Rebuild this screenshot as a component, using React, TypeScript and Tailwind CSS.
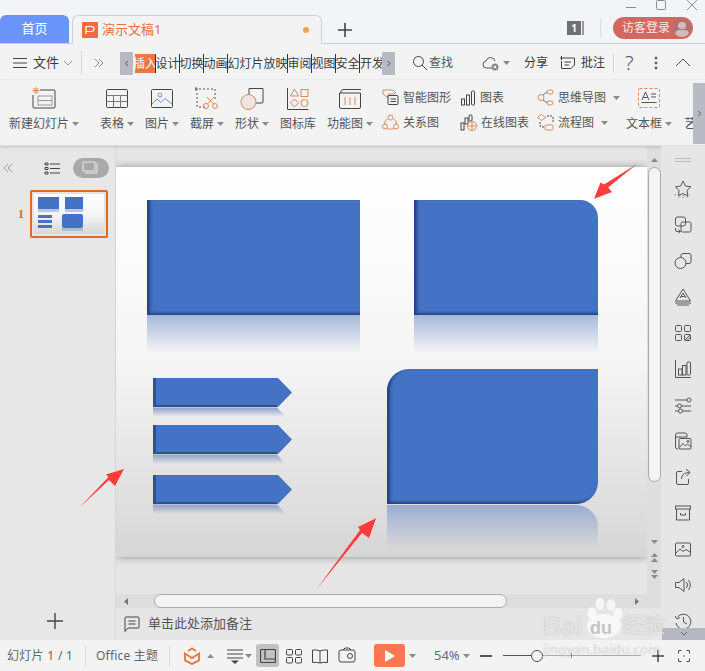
import type { ReactNode } from "react";

function Ico({ s = 24, h, className = "", children }: { s?: number; h?: number; className?: string; children?: ReactNode }) {
  return (
    <svg width={s} height={h ?? s} viewBox={`0 0 ${s} ${h ?? s}`} fill="none" stroke="currentColor" strokeWidth={1} className={`shrink-0 ${className}`}>
      {children}
    </svg>
  );
}

function Caret({ up = false, className = "" }: { up?: boolean; className?: string }) {
  return (
    <svg width="7" height="4" viewBox="0 0 7 4" className={`shrink-0 fill-[#8a8a8a] ${className}`}>
      <path d={up ? "M0 4 L3.5 0 L7 4 Z" : "M0 0 L7 0 L3.5 4 Z"} />
    </svg>
  );
}

const OR = "#d98a5f";

function Tool({ w, label, caret = true, icon }: { w: string; label: string; caret?: boolean; icon: ReactNode }) {
  return (
    <div className={`flex shrink-0 flex-col items-center pt-[7px] ${w}`}>
      <div className="flex h-6 w-6 items-center justify-center">{icon}</div>
      <div className="mt-[5px] flex h-4 items-center gap-[3px] whitespace-nowrap text-[12px] leading-4 text-[#555]">
        {label}
        {caret && <Caret />}
      </div>
    </div>
  );
}

function MiniTool({ icon, label, caret = false }: { icon: ReactNode; label: string; caret?: boolean }) {
  return (
    <div className="flex h-[25px] items-center gap-[4px] whitespace-nowrap text-[12px] text-[#555]">
      {icon}
      {label}
      {caret && <Caret className="ml-[3px]" />}
    </div>
  );
}

const tabs = [
  { t: "设计", w: "w-6" },
  { t: "切换", w: "w-6" },
  { t: "动画", w: "w-6" },
  { t: "幻灯片放映", w: "w-[60px]" },
  { t: "审阅", w: "w-6" },
  { t: "视图", w: "w-6" },
  { t: "安全", w: "w-6" },
  { t: "开发", w: "w-6" },
];

const sideIcons: ReactNode[] = [
  <><path d="M10 2 L12.4 7 L18 7.8 L14 11.5 L15 17 L10 14.5 L5.5 16.5 L6 11.5 L2.5 7.8 L7.6 7 Z" /><path d="M3 15 l-1.5 2 M7 16 l-1.5 3 M11 16 l-1.5 3 M15 17 l-1.5 2" strokeDasharray="1 1" /></>,
  <><rect x="2.5" y="2" width="10" height="9" rx="2" /><rect x="8" y="7" width="10" height="10" rx="1.5" /><path d="M2.5 13 v2 q0 1.5 1.5 1.5 h3 M5.5 14.5 L7.5 16.5 L5.5 18" /></>,
  <><rect x="8" y="2.5" width="10" height="10" rx="2" /><circle cx="7.5" cy="12" r="5.5" fill="#e6e6e6" /></>,
  <><path d="M2.5 14 L10 2 L17.5 14 Z" /><path d="M7 11 L10 6 L13 11 M8 9.5 h4" /><path d="M2 16 h16 M4 18 h12" /></>,
  <><rect x="2.5" y="2.5" width="6" height="6" rx="1" /><rect x="11.5" y="2.5" width="6" height="6" rx="1" /><rect x="2.5" y="11.5" width="6" height="6" rx="1" /><rect x="11.5" y="11.5" width="6" height="6" rx="1" /><path d="M12 17 L17 12 M14 17.5 L17.5 14" /></>,
  <><path d="M2.5 1 V18.5 H18" /><rect x="5.5" y="10" width="3.5" height="6" /><rect x="9.5" y="6.5" width="3.5" height="9.5" /><rect x="14" y="3" width="3.5" height="13" rx="1" /></>,
  <><path d="M2 5 H14 M18 5 h0 M2 11 H4 M9 11 H18 M2 16 H5 M10 16 H18" /><circle cx="16" cy="5" r="2" /><circle cx="6.5" cy="11" r="2" /><circle cx="7.5" cy="16" r="2" /></>,
  <><path d="M2.5 16 V4 q0-2 2-2 H12 q2 0 2 2 V6 M2.5 6 H14 M2.5 16 q0 2 2 2 H5" /><rect x="6" y="7.5" width="12" height="10.5" rx="1" /><path d="M6.5 16.5 L10 12.5 L12.5 15 L14.5 13 L18 16" /><circle cx="15" cy="10.5" r="1" /></>,
  <><path d="M9 4.5 H5 q-1.5 0-1.5 1.5 V16 q0 1.5 1.5 1.5 H14 q1.5 0 1.5-1.5 V12" /><path d="M8.5 12 q0-6 7.5-6.5 M13 2 L17 5.5 L13.5 9" /></>,
  <><rect x="2.5" y="3" width="15" height="3" /><path d="M3.5 6 V17 H16.5 V6 M7.5 10 V12 H12.5 V10" /></>,
  <><rect x="2.5" y="4" width="15" height="13" rx="1" /><path d="M3 14 L7 10 L10 12.5 L13 10.5 L17 13" /><circle cx="10" cy="7.5" r="1" /></>,
  <><path d="M2.5 7.5 H6 L11 3.5 V16.5 L6 12.5 H2.5 Z" /><path d="M13.5 7 q2 3 0 6 M15.5 5 q3.5 5 0 10" /></>,
  <><path d="M4.5 6 A7.5 7.5 0 1 1 3 12" /><path d="M2 5 L4 8 L7 6.5 M10.5 6 V11 L14 13" /></>,
];

export default function App() {
  return (
    <div className="relative flex h-[671px] w-[705px] flex-col overflow-hidden bg-[#f3f3f3] font-['Noto_Sans','Noto_Sans_CJK_SC',sans-serif]">
      {/* title bar */}
      <div className="relative flex h-[44px] shrink-0 items-end border-b border-[#ccd0da] bg-[#f3f4f8] pl-0">
        <div className="flex h-[28px] w-[69px] items-center justify-center rounded-t-[6px] bg-[#6b94fb] text-[13px] text-white">首页</div>
        <div className="relative top-px ml-[3px] flex h-[29px] w-[250px] items-center rounded-t-[6px] border border-b-0 border-[#ccd0da] bg-[#f3f3f3] pl-[9px] pr-[12px]">
          <div className="flex h-4 w-4 items-center justify-center rounded-[1px] bg-[#ef6c3e]">
            <Ico s={10} className="text-white"><path d="M1 9 V1.5 H6 Q9 1.5 9 4 Q9 6.5 6 6.5 H1" strokeWidth={1.2} /></Ico>
          </div>
          <span className="ml-[4px] text-[13px] text-[#e8703f]">演示文稿1</span>
          <span className="ml-auto h-[6px] w-[6px] rounded-full bg-[#eda354]" />
        </div>
        <div className="mb-[6px] ml-[16px] text-[#444]">
          <Ico s={14}><path d="M7 0 V14 M0 7 H14" strokeWidth={1.6} /></Ico>
        </div>
        <div className="absolute right-0 top-0 flex h-full w-[140px] flex-col">
          <div className="flex h-[13px] items-start text-[#8f8f8f]">
            <Ico s={12} className="ml-[60px]"><path d="M1 7.5 H11" /></Ico>
            <Ico s={12} className="ml-[18px]"><rect x="1.5" y="0.5" width="9" height="9" rx="1" /></Ico>
            <Ico s={12} className="ml-[19px]"><path d="M1 0 L11 10 M11 0 L1 10" /></Ico>
          </div>
          <div className="mt-[4px] flex items-center">
            <div className="ml-[2px] flex h-[14px] w-[17px] items-center">
              <span className="flex h-[14px] w-[14px] items-center justify-center bg-[#707070] text-[10px] font-bold leading-none text-white">1</span>
              <span className="ml-[1px] h-[14px] w-[2px] border-x border-[#999]" />
            </div>
            <span className="ml-[16px] h-[18px] w-px bg-[#d8dae0]" />
            <div className="ml-[12px] flex h-[22px] w-[80px] items-center justify-between rounded-full bg-[#d4675f] pl-[9px] pr-[2px] text-[12px] text-[#fbe8e5]">
              访客登录
              <span className="relative h-[18px] w-[18px] overflow-hidden rounded-full bg-[#a8747a]">
                <span className="absolute left-[5px] top-[3px] h-[7px] w-[8px] rounded-full bg-[#d9b9b7]" />
                <span className="absolute left-[2px] top-[11px] h-[9px] w-[14px] rounded-full bg-[#d9b9b7]" />
              </span>
            </div>
          </div>
        </div>
      </div>

      {/* menu row */}
      <div className="flex h-[36px] shrink-0 items-center pt-[2px] text-[13px] text-[#3c3c3c]">
        <Ico s={14} className="ml-[13px] text-[#444]"><path d="M0 2.5 H14 M0 7 H14 M0 11.5 H14" /></Ico>
        <span className="ml-[6px] w-[27px]">文件</span>
        <Ico s={10} className="ml-[3px] text-[#999]"><path d="M1 3 L5 7 L9 3" /></Ico>
        <span className="ml-[8px] h-[24px] w-px bg-[#d8d8d8]" />
        <Ico s={10} className="ml-[12px] text-[#888]"><path d="M1 1 L5 5 L1 9 M5 1 L9 5 L5 9" /></Ico>
        <div className="ml-[16px] flex h-[23px] w-[13px] items-center justify-center bg-[#b7bac2] text-[#555]">
          <Ico s={7}><path d="M5 1 L2.5 3.5 L5 6" /></Ico>
        </div>
        <div className="ml-[2px] flex h-[19px] w-[247px] items-center overflow-hidden text-[12px] leading-[19px]">
          <div className="flex h-full w-[21px] shrink-0 items-center justify-center overflow-hidden whitespace-nowrap border-r border-[#333] bg-[#e8774a] text-white">插入</div>
          {tabs.map((t, i) => (
            <div key={t.t} className={`flex h-full shrink-0 items-center justify-center whitespace-nowrap border-r border-[#333] ${t.w} ${i === 7 ? "border-r-0" : ""}`}>
              {t.t}
            </div>
          ))}
        </div>
        <div className="flex h-[23px] w-[13px] items-center justify-center bg-[#b7bac2] text-[#555]">
          <Ico s={7}><path d="M2.5 1 L5 3.5 L2.5 6" /></Ico>
        </div>
        <Ico s={16} className="ml-[17px] text-[#444]"><circle cx="6.5" cy="6.5" r="5" /><path d="M10 10 L15 15" /></Ico>
        <span className="ml-[1px] text-[12px] text-[#555]">查找</span>
        <Ico s={18} className="ml-[29px] text-[#555]">
          <path d="M11.5 14 H4.5 Q1 14 1 10.5 Q1 7.5 4 7 Q5 3.5 8.5 3.5 Q12 3.5 13 7" />
          <circle cx="13" cy="13" r="3.5" fill="#888" stroke="none" />
          <path d="M11.6 11.6 L14.4 14.4 M14.4 11.6 L11.6 14.4" stroke="#fff" />
        </Ico>
        <Caret className="ml-[3px]" />
        <span className="ml-[14px] text-[12px]">分享</span>
        <Ico s={16} className="ml-[12px] text-[#444]">
          <path d="M4 3 H14.5 V10 L11 13.5 H1.5 V6 M1.5 1 V5 M0 3 H4 M4.5 7 H11 M4.5 10 H9" />
        </Ico>
        <span className="ml-[5px] text-[12px]">批注</span>
        <span className="ml-[8px] h-[20px] w-px bg-[#d8d8d8]" />
        <span className="ml-[11px] w-[12px] text-[20px] font-light leading-none text-[#555]">?</span>
        <Ico s={4} h={14} className="ml-[17px] text-[#555]"><circle cx="2" cy="2" r="1" fill="currentColor" /><circle cx="2" cy="7" r="1" fill="currentColor" /><circle cx="2" cy="12" r="1" fill="currentColor" /></Ico>
        <Ico s={16} className="ml-[17px] text-[#555]"><path d="M1 11 L8 4 L15 11" /></Ico>
      </div>

      {/* ribbon */}
      <div className="relative flex h-[66px] shrink-0 overflow-hidden border-b border-[#dcdcdc] shadow-[0_1px_3px_rgba(0,0,0,0.15)]">
        <Tool
          w="w-[88px]"
          label="新建幻灯片"
          icon={
            <Ico s={26} className="text-[#444]">
              <path d="M9 4 H23 Q24 4 24 5 V21 Q24 22 23 22 H3 Q2 22 2 21 V9" />
              <rect x="7" y="10" width="14" height="9" stroke="#999" />
              <path d="M7 14.5 H21" stroke="#999" />
              <path d="M5 1 V8 M1.5 4.5 H8.5 M2.5 2 L7.5 7 M7.5 2 L2.5 7" stroke={OR} />
            </Ico>
          }
        />
        <span className="ml-[3px] mt-[3px] h-[60px] w-px bg-[#e0e0e0]" />
        <Tool
          w="w-[52px]"
          label="表格"
          icon={
            <Ico s={24} className="text-[#444]">
              <rect x="1.5" y="2.5" width="21" height="18" rx="1" />
              <path d="M1.5 8.5 H22.5 M1.5 14.5 H22.5 M8.5 8.5 V20.5 M15.5 8.5 V20.5" stroke="#777" />
            </Ico>
          }
        />
        <Tool
          w="w-[38px]"
          label="图片"
          icon={
            <Ico s={24} className="text-[#444]">
              <rect x="1.5" y="2.5" width="21" height="18" rx="1" />
              <circle cx="10" cy="8" r="2" stroke="#6d93d6" />
              <path d="M2 17 L7 12 L11 15.5 L15 11.5 L22 17" stroke="#6d93d6" />
            </Ico>
          }
        />
        <Tool
          w="w-[52px]"
          label="截屏"
          icon={
            <Ico s={24} className="text-[#555]">
              <path d="M1 4 V0 M-1 2 H3" />
              <path d="M4 2 H20 V12 M2 6 V20 H10" strokeDasharray="2 2" />
              <circle cx="11" cy="19" r="2.5" stroke={OR} />
              <circle cx="20" cy="19" r="2.5" stroke={OR} />
              <path d="M12.5 17 L19 10 M18.5 17 L12 10" stroke={OR} />
            </Ico>
          }
        />
        <Tool
          w="w-[38px]"
          label="形状"
          icon={
            <Ico s={24} className="text-[#444]">
              <path d="M9 1.5 H23 V15 Q23 16 22 16 H16 M9 1.5 V8" />
              <circle cx="8.5" cy="15" r="7.5" fill="#f1e4de" stroke={OR} />
            </Ico>
          }
        />
        <Tool
          w="w-[54px]"
          label="图标库"
          caret={false}
          icon={
            <Ico s={24} className="text-[#444]">
              <path d="M1.5 1 V22.5 H22.5" />
              <path d="M8.5 2 L12.5 9 H4.5 Z M8.5 12 L12.5 16 L8.5 20 L4.5 16 Z" stroke={OR} />
              <rect x="15" y="2.5" width="7" height="7" stroke={OR} />
              <circle cx="18.5" cy="16" r="3.5" stroke={OR} />
            </Ico>
          }
        />
        <Tool
          w="w-[50px]"
          label="功能图"
          icon={
            <Ico s={24} className="text-[#444]">
              <path d="M1.5 6 V20 Q1.5 21.5 3 21.5 H21 Q22.5 21.5 22.5 20 V6 Z" />
              <path d="M2.5 6 Q3 2.5 5 2.5 H23" />
              <path d="M7 10 V18 M12 10 V18 M17 10 V18" stroke={OR} />
            </Ico>
          }
        />
        <div className="ml-[7px] flex w-[78px] shrink-0 flex-col pt-[5px]">
          <MiniTool
            label="智能图形"
            icon={
              <Ico s={17} className="text-[#444]">
                <path d="M1 1 H11 L14 4 L11 5 H6 V9 L1 5 Z" stroke={OR} />
                <rect x="6" y="6.5" width="10" height="9" rx="1" />
                <path d="M8.5 10 H14 M8.5 12.5 H14" />
              </Ico>
            }
          />
          <MiniTool
            label="关系图"
            icon={
              <Ico s={17} className="text-[#d98a5f]">
                <circle cx="8.5" cy="3.5" r="2.5" />
                <circle cx="3" cy="12.5" r="2.5" />
                <circle cx="14" cy="12.5" r="2.5" />
                <path d="M5 5 Q2.5 7 2.5 10 M12 5 Q14.5 7 14.5 10 M5.5 14.5 Q8.5 16 11.5 14.5" />
              </Ico>
            }
          />
        </div>
        <div className="flex w-[77px] shrink-0 flex-col pt-[5px]">
          <MiniTool
            label="图表"
            icon={
              <Ico s={16} className="text-[#444]">
                <rect x="1.5" y="9" width="3" height="6" />
                <rect x="6.5" y="5" width="3" height="10" />
                <rect x="11.5" y="1" width="3" height="14" rx="1" />
              </Ico>
            }
          />
          <MiniTool
            label="在线图表"
            icon={
              <Ico s={17} className="text-[#444]">
                <rect x="1" y="9" width="3" height="7" />
                <rect x="5" y="4" width="3" height="6" />
                <rect x="9" y="1" width="3" height="6" rx="1" />
                <circle cx="12" cy="12" r="4.5" fill="#f3f3f3" stroke={OR} />
                <path d="M7.5 12 H16.5 M12 7.5 V16.5" stroke={OR} />
              </Ico>
            }
          />
        </div>
        <div className="flex w-[89px] shrink-0 flex-col pt-[5px]">
          <MiniTool
            label="思维导图"
            caret
            icon={
              <Ico s={17} className="text-[#d98a5f]">
                <circle cx="4" cy="8.5" r="3" />
                <rect x="10" y="1" width="6" height="4" rx="2" />
                <rect x="10" y="12" width="6" height="4" rx="2" />
                <path d="M6 6 L10 3 M6 11 L10 14" stroke="#777" />
              </Ico>
            }
          />
          <MiniTool
            label="流程图"
            caret
            icon={
              <Ico s={17} className="text-[#444]">
                <path d="M4.5 0.5 L8.5 3.5 L4.5 6.5 L0.5 3.5 Z" stroke={OR} />
                <rect x="8" y="11" width="8" height="5" rx="1.5" stroke={OR} />
                <path d="M10 2 H14 Q16 2 16 4 V8 M3 8 V11 Q3 13 5 13 H7" strokeDasharray="2 1" />
              </Ico>
            }
          />
        </div>
        <Tool
          w="w-[46px]"
          label="文本框"
          icon={
            <Ico s={24} className="text-[#555]">
              <rect x="1.5" y="1.5" width="21" height="19" rx="1" stroke={OR} strokeDasharray="3 2" />
              <path d="M5 13 L8.5 5 L12 13 M6.5 10.5 H10.5 M14 7 H19 M14 10 H19 M4.5 15.5 H19.5" />
            </Ico>
          }
        />
        <div className="ml-[12px]">
          <Tool w="w-[46px]" label="艺术字" icon={null} />
        </div>
        <div className="absolute right-0 top-[3px] flex h-[61px] w-[12px] items-center justify-center bg-[#b8bbc3] text-[#666]">
          <Ico s={7}><path d="M2 1 L5 3.5 L2 6" /></Ico>
        </div>
      </div>

      {/* main */}
      <div className="flex h-[494px] shrink-0">
        {/* thumbnails */}
        <div className="flex w-[116px] shrink-0 flex-col border-r border-[#d6d6d6] bg-[#e7e7e7]">
          <div className="flex h-[32px] items-center pt-[12px]">
            <Ico s={10} className="ml-[3px] text-[#999]"><path d="M5 1 L1 5 L5 9 M9 1 L5 5 L9 9" /></Ico>
            <Ico s={16} className="ml-[31px] text-[#444]">
              <path d="M1 3 h3 v2 h-3 Z M1 7.5 h3 v2 h-3 Z M1 12 h3 v2 h-3 Z M6 4 H16 M6 8.5 H16 M6 13 H16" />
            </Ico>
            <div className="ml-[13px] flex h-[20px] w-[36px] items-center justify-center rounded-full bg-[#a9a9a9] text-[#e9e9e9]">
              <Ico s={18} h={14}><path d="M1 1 H13 V10 H1 Z M15 2 V12 H3" /></Ico>
            </div>
          </div>
          <div className="mt-[12px] flex items-center">
            <span className="ml-[18px] w-[12px] font-['Liberation_Serif',serif] text-[12px] font-bold text-[#dc6a2c]">1</span>
            <div className="h-[48px] w-[78px] rounded-[2px] border-2 border-[#dc6a2c] bg-[#e4e4e4] p-[2px]">
              <div className="relative h-full w-full bg-gradient-to-b from-white via-[#f5f5f5] to-[#d8d8d8]">
                <div className="absolute left-[4px] top-[3px] h-[12px] w-[21px] bg-[#4472c4]" />
                <div className="absolute left-[4px] top-[15px] h-[3px] w-[21px] bg-[#b8c6e2]" />
                <div className="absolute left-[31px] top-[3px] h-[12px] w-[18px] bg-[#4472c4]" />
                <div className="absolute left-[31px] top-[15px] h-[3px] w-[18px] bg-[#b8c6e2]" />
                <div className="absolute left-[4px] top-[21px] h-[3px] w-[14px] bg-[#4472c4]" />
                <div className="absolute left-[4px] top-[26px] h-[3px] w-[14px] bg-[#4472c4]" />
                <div className="absolute left-[4px] top-[31px] h-[3px] w-[14px] bg-[#4472c4]" />
                <div className="absolute left-[28px] top-[20px] h-[14px] w-[21px] rounded-[2px] bg-[#4472c4]" />
                <div className="absolute left-[28px] top-[34px] h-[3px] w-[21px] bg-[#aebcd8]" />
              </div>
            </div>
          </div>
          <div className="mt-auto mb-[11px] ml-[47px] text-[#444]">
            <Ico s={16}><path d="M8 0 V16 M0 8 H16" strokeWidth={1.4} /></Ico>
          </div>
        </div>

        {/* editor */}
        <div className="flex w-[545px] shrink-0 flex-col bg-[#e6e6e6]">
          <div className="flex h-[448px] shrink-0">
            <div className="w-[531px] shrink-0 overflow-hidden pt-[21px]">
              <div className="relative h-[390px] w-full bg-gradient-to-b from-white via-[#f5f5f5] to-[#d6d6d6] shadow-[0_0_8px_rgba(0,0,0,0.38)]">
                <div className="absolute left-[31px] top-[33px] h-[115px] w-[213px] bg-[#4472c4] shadow-[inset_3px_-2px_3px_rgba(20,40,90,0.65)]" />
                <div className="absolute left-[31px] top-[148px] h-[38px] w-[213px] bg-gradient-to-b from-[#a6b8da] to-transparent" />

                <div className="absolute left-[298px] top-[33px] h-[115px] w-[184px] rounded-tr-[18px] bg-[#4472c4] shadow-[inset_3px_-2px_3px_rgba(20,40,90,0.65)]" />
                <div className="absolute left-[298px] top-[148px] h-[38px] w-[184px] bg-gradient-to-b from-[#a6b8da] to-transparent" />

                {[211, 258, 308].map((top) => (
                  <svg key={top} className="absolute left-[37px]" style={{ top }} width="140" height="40" viewBox="0 0 140 40">
                    <defs>
                      <linearGradient id={`rf${top}`} x1="0" y1="0" x2="0" y2="1">
                        <stop offset="0" stopColor="#8ea1c8" />
                        <stop offset="1" stopColor="#8ea1c8" stopOpacity="0" />
                      </linearGradient>
                    </defs>
                    <path d="M0 29.5 H124 L133 39 H0 Z" fill={`url(#rf${top})`} />
                    <path d="M0 0 H3 V26 H124 L125 29 H0 Z" fill="#30518f" />
                    <path d="M3 0 H125 L139 14.5 L125 29 L124 27 H3 Z" fill="#4472c4" />
                  </svg>
                ))}

                <div className="absolute left-[271px] top-[202px] h-[135px] w-[211px] rounded-tl-[22px] rounded-br-[22px] bg-[#4472c4] shadow-[inset_3px_-2px_3px_rgba(20,40,90,0.65)]" />
                <div className="absolute left-[271px] top-[338px] h-[44px] w-[211px] rounded-tr-[22px] bg-gradient-to-b from-[#9aadd0] to-[#dcdcdc]/0" />
              </div>
            </div>
            {/* vertical scrollbar */}
            <div className="flex w-[14px] shrink-0 flex-col items-center bg-[#dedede]">
              <Caret up className="mt-[12px]" />
              <div className="mt-[5px] h-[315px] w-[13px] rounded-full border border-[#aaa] bg-[#f4f4f4]" />
              <Caret className="mt-[58px]" />
              <div className="mt-[9px] flex flex-col gap-px">
                <Caret up />
                <Caret up />
              </div>
              <div className="mt-[8px] flex flex-col gap-px">
                <Caret />
                <Caret />
              </div>
            </div>
          </div>
          {/* horizontal scrollbar */}
          <div className="flex h-[14px] shrink-0 items-center bg-[#dedede]">
            <svg width="4" height="7" viewBox="0 0 4 7" className="ml-[8px] fill-[#777]"><path d="M4 0 V7 L0 3.5 Z" /></svg>
            <div className="ml-[26px] h-[14px] w-[353px] rounded-full border border-[#aaa] bg-[#f4f4f4]" />
            <svg width="4" height="7" viewBox="0 0 4 7" className="ml-[128px] fill-[#777]"><path d="M0 0 V7 L4 3.5 Z" /></svg>
          </div>
          {/* notes */}
          <div className="flex h-[32px] shrink-0 items-center pl-[8px] text-[13px] text-[#555]">
            <Ico s={16} className="text-[#444]">
              <path d="M1 15.5 V2 Q1 1 2 1 H14 Q15 1 15 2 V11 Q15 12 14 12 H4 Z M4.5 5 H11.5 M4.5 8 H11.5" />
            </Ico>
            <span className="ml-[8px]">单击此处添加备注</span>
          </div>
        </div>

        {/* right panel */}
        <div className="relative flex w-[44px] shrink-0 flex-col items-center bg-[#e6e6e6] pt-[12px] text-[#555]">
          <div className="h-[4px] w-[16px] border-y border-[#bbb]" />
          <div className="mt-[9px] flex flex-col">
            {sideIcons.map((ic, i) => (
              <div key={i} className="flex h-[36px] items-center justify-center">
                <Ico s={20}>{ic}</Ico>
              </div>
            ))}
          </div>
          <div className="absolute bottom-0 left-px right-0 flex h-[12px] items-center justify-center bg-[#b5b8c1] text-[#666]">
            <Ico s={10}><path d="M2 3 L5 6 L8 3" /></Ico>
          </div>
        </div>
      </div>

      {/* status bar */}
      <div className="flex h-[31px] shrink-0 items-center bg-[#f3f3f3] text-[12px] text-[#666]">
        <span className="ml-[7px] w-[70px] whitespace-nowrap tracking-[0.3px]">幻灯片 1 / 1</span>
        <span className="ml-[8px] h-[22px] w-px bg-[#dcdcdc]" />
        <span className="ml-[10px] w-[63px] whitespace-nowrap tracking-[0.2px]">Office 主题</span>
        <span className="ml-[10px] h-[22px] w-px bg-[#dcdcdc]" />
        <Ico s={18} className="ml-[13px] text-[#ec7a45]">
          <path d="M5 4 L9 1.5 L13 4 M2 6.5 L9 11 L16 6.5 V13.5 L9 17 L2 13.5 Z" strokeWidth={2} />
        </Ico>
        <Caret up className="ml-[6px]" />
        <Ico s={18} className="ml-[12px] text-[#444]">
          <path d="M1 3 H17 M1 7 H17 M1 11 H17" />
          <path d="M5 13.5 H13 L9 17 Z" fill="currentColor" stroke="none" />
        </Ico>
        <Caret className="ml-[1px]" />
        <div className="ml-[4px] flex h-[23px] w-[23px] items-center justify-center rounded-[3px] bg-[#c1c1c1] text-[#444]">
          <Ico s={16}><rect x="0.5" y="1.5" width="15" height="13" rx="1" strokeWidth={1.2} /><path d="M5 1.5 V11 H15.5" strokeWidth={1.2} /></Ico>
        </div>
        <Ico s={16} className="ml-[7px] text-[#444]">
          <rect x="0.5" y="1.5" width="6" height="5.5" rx="1" />
          <rect x="9.5" y="1.5" width="6" height="5.5" rx="1" />
          <rect x="0.5" y="9.5" width="6" height="5.5" rx="1" />
          <rect x="9.5" y="9.5" width="6" height="5.5" rx="1" />
        </Ico>
        <Ico s={16} className="ml-[10px] text-[#444]"><path d="M8 3 Q5 1.5 0.5 2 V14.5 Q5 14 8 15 Q11 14 15.5 14.5 V2 Q11 1.5 8 3 V15" /></Ico>
        <Ico s={18} className="ml-[10px] text-[#444]">
          <path d="M3 3 H15 Q17 3 17 5 V13 Q17 15 15 15 H3 Q1 15 1 13 V5 Q1 3 3 3 M5 3 L7 1 H11 L13 3" />
          <circle cx="12" cy="9" r="2.5" />
        </Ico>
        <div className="ml-[18px] flex h-[23px] w-[31px] items-center justify-center rounded-[3px] bg-[#fd7654]">
          <svg width="10" height="12" viewBox="0 0 10 12" className="fill-white"><path d="M0 0 L10 6 L0 12 Z" /></svg>
        </div>
        <Caret className="ml-[4px]" />
        <span className="ml-[18px] w-[26px] text-[13px] text-[#5f6b80]">54%</span>
        <Caret className="ml-[3px]" />
        <span className="ml-[10px] h-[2px] w-[12px] bg-[#555]" />
        <div className="relative ml-[11px] h-[12px] w-[138px]">
          <span className="absolute left-0 top-[5px] h-px w-[138px] bg-[#aaa]" />
          <span className="absolute left-0 top-[5px] h-px w-[30px] bg-[#555]" />
          <span className="absolute left-[68px] top-[3px] h-[5px] w-px bg-[#888]" />
          <span className="absolute left-[28px] top-0 h-[12px] w-[12px] rounded-full border border-[#555] bg-[#f3f3f3]" />
        </div>
        <Ico s={12} className="ml-[11px] text-[#444]"><path d="M6 0 V12 M0 6 H12" strokeWidth={1.5} /></Ico>
        <Ico s={12} className="ml-[14px] text-[#444]">
          <path d="M0.5 3.5 V1 Q0.5 0.5 1 0.5 H3.5 M8.5 0.5 H11 Q11.5 0.5 11.5 1 V3.5 M11.5 8.5 V11 Q11.5 11.5 11 11.5 H8.5 M3.5 11.5 H1 Q0.5 11.5 0.5 11 V8.5" />
          <circle cx="6" cy="6" r="0.7" fill="currentColor" stroke="none" />
        </Ico>
      </div>

      {/* red annotation arrows */}
      <svg className="pointer-events-none absolute left-0 top-0" width="705" height="671" viewBox="0 0 705 671">
        <path d="M637 164 L608 187.5 L612 192 L594 198.7 L600.5 182.5 L604 184.5 Z" fill="#ff3b3b" />
        <path d="M79.5 507.5 L109 480 L115 486 L124 469 L106 474.5 L108.5 477 Z" fill="#ff3b3b" />
        <path d="M316 590 L362 533 L369 538 L376 518.3 L358 527 L360 530 Z" fill="#ff3b3b" />
      </svg>

      {/* watermark */}
      <div className="pointer-events-none absolute left-[540px] top-[598px] h-[60px] w-[130px] text-white/70 [text-shadow:0_0_1px_rgba(0,0,0,0.3)]">
        <svg width="40" height="42" viewBox="0 0 40 42" className="absolute left-[45px] top-0 fill-white/70">
          <ellipse cx="7" cy="15" rx="4.5" ry="6" />
          <ellipse cx="15" cy="6" rx="4.5" ry="6" />
          <ellipse cx="26" cy="7" rx="4.5" ry="6" />
          <ellipse cx="33" cy="16" rx="4.5" ry="6" />
          <ellipse cx="19" cy="28" rx="17" ry="12" />
        </svg>
        <div className="absolute left-[3px] top-[13px] whitespace-nowrap font-['Liberation_Sans',sans-serif] text-[26px] font-bold leading-[30px]">Bai</div>
        <div className="absolute left-[50px] top-[20px] whitespace-nowrap font-['Liberation_Sans',sans-serif] text-[18px] font-bold leading-[20px] text-[#c4c4c4] [text-shadow:none]">du</div>
        <div className="absolute left-[83px] top-[12px] whitespace-nowrap text-[21px] font-bold leading-[28px]">经验</div>
        <div className="absolute left-[3px] top-[42px] whitespace-nowrap text-[13px] leading-[18px] tracking-[0.3px]">jingyan.baidu.com</div>
      </div>
    </div>
  );
}
